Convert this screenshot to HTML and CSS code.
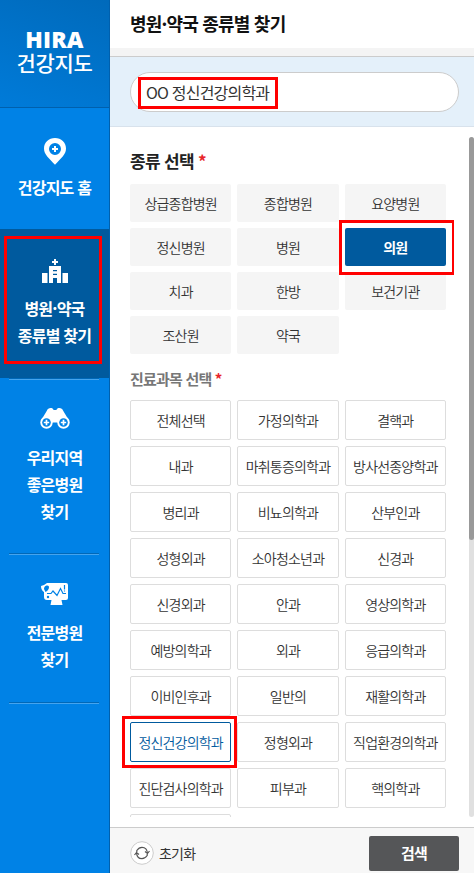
FILE: index.html
```html
<!DOCTYPE html>
<html lang="ko">
<head>
<meta charset="utf-8">
<title>HIRA 건강지도</title>
<link rel="stylesheet" href="styles.css">
</head>
<body>
<div class="app">
  <nav class="side">
    <div class="logo"><span class="logo-en">HIRA</span><span class="logo-ko">건강지도</span></div>
    <a class="item home">
      <svg class="icon" width="30" height="28" viewBox="0 0 30 28"><path fill="#fff" fill-rule="evenodd" d="M15 1C8.800 1 4 5.500 4 11.500c0 6 5 9.700 11 16.300 6-6.600 11-10.300 11-16.300C26 5.500 21.200 1 15 1zm0 5a6 6 0 1 1 0 12 6 6 0 0 1 0-12z"/><path stroke="#fff" stroke-width="2" d="M15 9v6M12 12h6"/></svg>
      <span>건강지도 홈</span>
    </a>
    <a class="item active">
      <svg class="icon" width="30" height="28" viewBox="0 0 30 28"><path stroke="#fff" stroke-width="2" d="M15 1v6M12 4h6"/><path fill="#fff" fill-rule="evenodd" d="M9 8h12v17h-4v-5h-4v5H9zM13 12v1.300h4V12zm0 3.700V17h4v-1.300zM2 15h5.500v10H2zM22.500 15H28v10h-5.500z"/></svg>
      <span>병원·약국</span><span>종류별 찾기</span>
      <i class="mark mark-side"></i>
    </a>
    <a class="item region">
      <svg class="icon" width="30" height="28" viewBox="0 0 30 28"><path fill="#fff" d="M7 4.500C7.500 1.500 13 1 13.500 4h3c.5-3 6-2.500 6.500.5l6 10-8 6-3-4h-6l-3 4-8-6z"/><circle cx="6.500" cy="16.500" r="6.200" fill="#fff"/><circle cx="23.500" cy="16.500" r="6.200" fill="#fff"/><circle cx="6.500" cy="16.500" r="4.300" fill="#0082e6"/><circle cx="23.500" cy="16.500" r="4.300" fill="#0082e6"/><path stroke="#fff" stroke-width="1.700" d="M6.500 13.800v5.400M3.800 16.500h5.400M23.500 13.800v5.400M20.800 16.500h5.400"/></svg>
      <span>우리지역</span><span>좋은병원</span><span>찾기</span>
    </a>
    <a class="item special">
      <svg class="icon" width="30" height="28" viewBox="0 0 30 28"><path fill="#fff" d="M7 2h19q2 0 2 2v13q0 2-2 2h-4.500l1 5h-12l1-5H7q-3 0-3-3v-5Q1 9 1 5l3-1z"/><path fill="#0082e6" d="M4 8q0-3 2.500-3.500Q9 4 9 6q0 3-3.500 5z"/><path fill="none" stroke="#0082e6" stroke-width="1.200" d="M7 12.500h4l2-2.500 4 4.500 3.500-7 2.500 5h3M24.500 4v4.500M24.500 9.500v1"/><circle cx="8" cy="16" r="1.200" fill="#0082e6"/></svg>
      <span>전문병원</span><span>찾기</span>
    </a>
  </nav>
  <main class="main">
    <header class="title"><h1>병원·약국 종류별 찾기</h1></header>
    <div class="search">
      <div class="field">OO 정신건강의학과</div>
      <i class="mark mark-search"></i>
    </div>
    <section class="body">
      <div class="content">
        <h2>종류 선택 <em>*</em></h2>
        <div class="grid kinds">
          <span>상급종합병원</span><span>종합병원</span><span>요양병원</span>
          <span>정신병원</span><span>병원</span><span class="on">의원<i class="mark mark-kind"></i></span>
          <span>치과</span><span>한방</span><span>보건기관</span>
          <span>조산원</span><span>약국</span>
        </div>
        <h3>진료과목 선택 <em>*</em></h3>
        <div class="grid subjects">
          <span>전체선택</span><span>가정의학과</span><span>결핵과</span>
          <span>내과</span><span>마취통증의학과</span><span>방사선종양학과</span>
          <span>병리과</span><span>비뇨의학과</span><span>산부인과</span>
          <span>성형외과</span><span>소아청소년과</span><span>신경과</span>
          <span>신경외과</span><span>안과</span><span>영상의학과</span>
          <span>예방의학과</span><span>외과</span><span>응급의학과</span>
          <span>이비인후과</span><span>일반의</span><span>재활의학과</span>
          <span class="on">정신건강의학과<i class="mark mark-subject"></i></span><span>정형외과</span><span>직업환경의학과</span>
          <span>진단검사의학과</span><span>피부과</span><span>핵의학과</span>
          <span></span>
        </div>
      </div>
      <div class="track"><div class="thumb"></div></div>
    </section>
    <footer class="foot">
      <div class="reset">
        <svg width="24" height="24" viewBox="0 0 24 24"><circle cx="12" cy="12" r="11.300" fill="#fff" stroke="#ccc"/><g fill="none" stroke="#555" stroke-width="1.200"><path d="M6.800 11V9.500Q9 6.300 12 6.300q5 0 5.500 6M17.200 13v1.500Q15 17.700 12 17.700q-5 0-5.500-6"/><path d="M15 10.500l2.500 2 2-2.500M9 13.500l-2.500-2-2 2.500"/></g></svg>
        <span>초기화</span>
      </div>
      <button class="go">검색</button>
    </footer>
  </main>
</div>
</body>
</html>
```

FILE: styles.css
```css
* { box-sizing: border-box; }
body { margin: 0; font-family: "Noto Sans CJK KR", sans-serif; letter-spacing: -0.05em; color: #333; background: #fff; }
.app { display: flex; width: 474px; height: 873px; overflow: hidden; }

.side { width: 110px; flex: none; background: #0082e6; border-right: 1px solid #0060ad; color: #fff; }
.logo { height: 108px; padding-top: 27px; border-bottom: 1px solid #0060ad; background: linear-gradient(200deg, #006abb, #007bd9); display: flex; flex-direction: column; align-items: center; }
.logo-en { font: 800 23px/24px "Open Sans", sans-serif; letter-spacing: 0.1px; }
.logo-ko { font-size: 21px; line-height: 23px; font-weight: 500; letter-spacing: -0.3px; }
.item { display: flex; flex-direction: column; align-items: center; padding: 26px 0 28px; font-size: 16px; line-height: 27px; font-weight: 700; position: relative; }
.icon { flex: none; margin-bottom: 10px; }
.home { padding: 29px 0 28px; }
.home .icon, .active .icon { margin-bottom: 9px; }
.active { padding-top: 29px; background: #005a9e; height: 149px; margin-bottom: 2px; }
.active::after, .region::after, .special::after { content: ""; position: absolute; left: 9px; right: 10px; bottom: -2px; height: 2px; background: linear-gradient(#0068b8 50%, #45a4ee 50%); }
.region { margin-bottom: 2px; }
.special { padding-bottom: 29px; }

.main { flex: 1; min-width: 0; display: flex; flex-direction: column; }
.title { height: 57px; border-bottom: 1px solid #ccc; background: linear-gradient(#fff 48px, #f4f4f4 48px); padding: 0 20px; }
h1 { margin: 0; font-size: 18px; line-height: 46px; font-weight: 700; color: #111; }
.search { height: 70px; background: #e4f0fa; border-bottom: 1px solid #d8e2ec; padding: 15px 15px 0 20px; position: relative; }
.field { height: 40px; border: 1px solid #ccc; border-radius: 20px; background: #fff; padding-left: 15px; font-size: 16px; line-height: 39px; color: #333; }
.body { height: 690px; flex: none; display: flex; justify-content: space-between; padding-top: 10px; }
.content { width: 344px; height: 680px; padding-left: 20px; overflow: hidden; }
h2, h3 { margin: 0; white-space: nowrap; }
h2 { font-size: 17px; line-height: 26px; padding-top: 11px; color: #222; font-weight: 700; letter-spacing: -0.04em; }
h3 { font-size: 15px; line-height: 24px; padding-top: 13px; color: #777; font-weight: 700; }
em { font-style: normal; color: #e8252a; }
.grid { display: grid; grid-template-columns: repeat(3, 1fr); gap: 6px; width: 316px; font-size: 14px; font-weight: 350; }
.grid span { display: flex; align-items: center; justify-content: center; border-radius: 2px; white-space: nowrap; position: relative; }
.kinds { margin-top: 10px; grid-auto-rows: 38px; }
.kinds span { background: #f5f5f5; padding-bottom: 1px; }
.kinds .on { background: #005a9e; color: #fff; font-weight: 700; z-index: 1; }
.subjects { margin-top: 9px; grid-auto-rows: 40px; }
.subjects span { border: 1px solid #ddd; padding-bottom: 1px; }
.subjects .on { border-color: #005a9e; color: #005a9e; z-index: 1; }
.track { width: 5px; height: 680px; background: #e0e0e0; border-radius: 3px; }
.thumb { height: 403px; background: #999; border-radius: 3px; }
.foot { margin-top: 10px; height: 46px; border-top: 1px solid #ccc; background: #f7f7f7; display: flex; justify-content: space-between; padding: 8px 15px 0 20px; }
.reset { display: flex; align-items: center; gap: 5px; height: 34px; font-size: 14px; }
.reset span { padding-bottom: 1px; }
.go { width: 90px; height: 35px; border: 0; border-radius: 2px; background: #555658; color: #fff; font: 700 15px/34px "Noto Sans CJK KR", sans-serif; letter-spacing: -0.05em; padding: 0 0 1px; }

.mark { position: absolute; border: 3px solid #f00; }
.mark-side { left: 4px; top: 7px; width: 98px; height: 128px; }
.mark-search { left: 28px; top: 20px; width: 140px; height: 32px; }
.mark-kind { left: -6px; top: -8px; width: 116px; height: 55px; }
.mark-subject { left: -9px; top: -7px; width: 115px; height: 52px; }
```
